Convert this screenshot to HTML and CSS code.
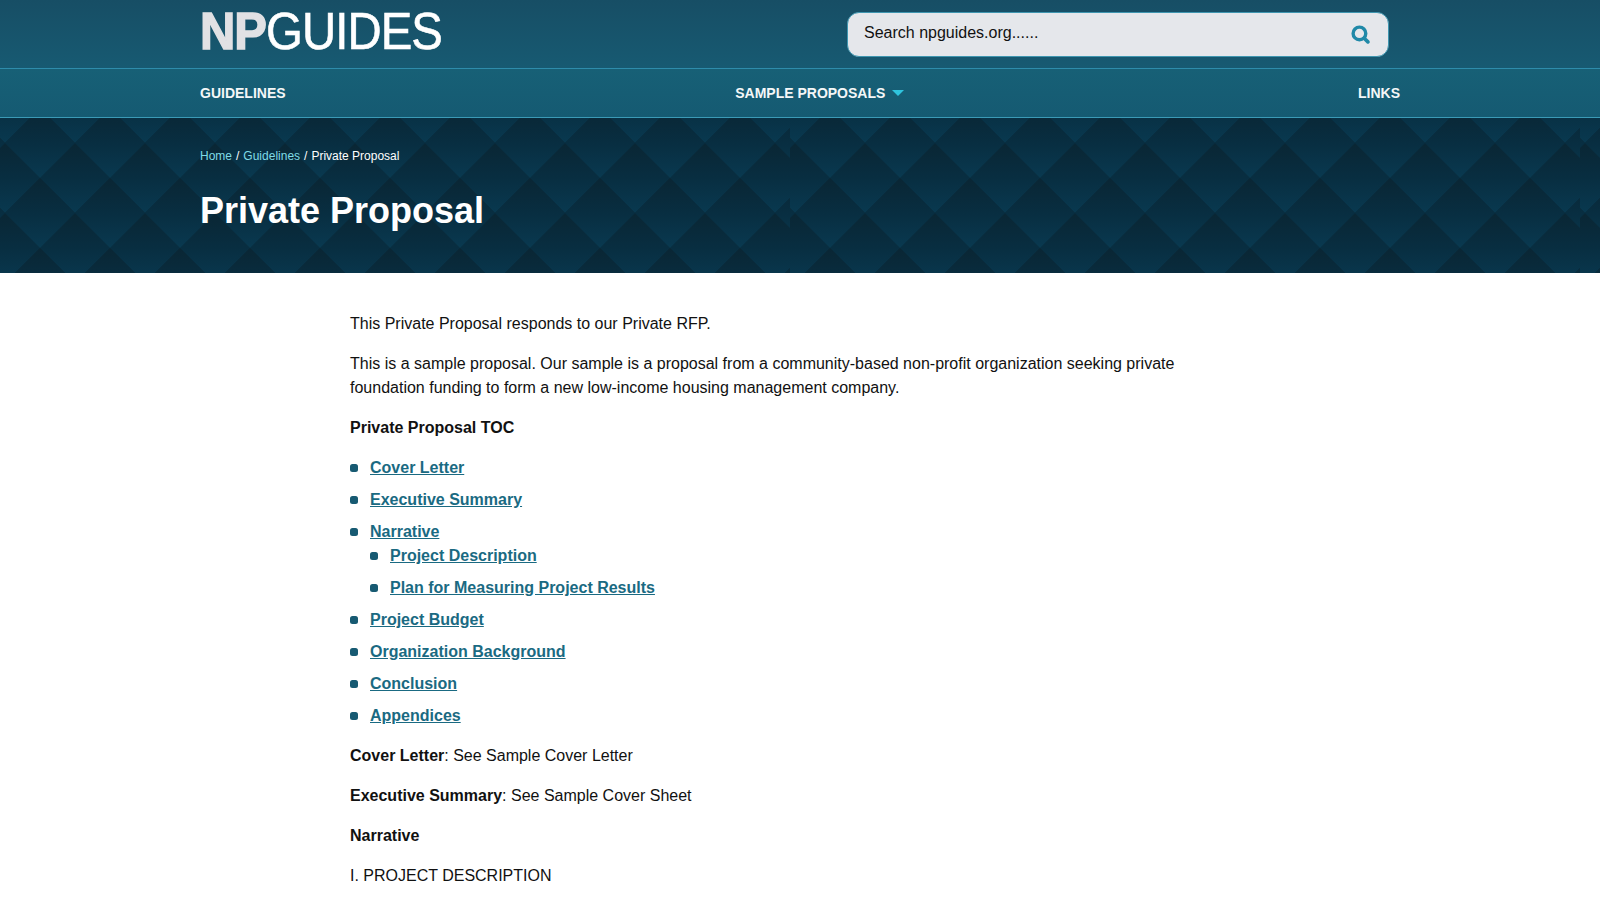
FILE: index.html
```html
<!DOCTYPE html>
<html lang="en">
<head>
    <meta charset="UTF-8">
    <meta name="viewport" content="width=device-width, initial-scale=1.0">
    <title>Private Proposal</title>
    <link rel="stylesheet" href="styles.css">
</head>
<body>
    <!-- logo and search -->
    <header class="top-bar">
        <div class="wrap top-inner">
            <a class="logo" href="#"><span class="logo-np">NP</span><span class="logo-guides">GUIDES</span></a>
            <form class="search">
                <span class="search-text">Search npguides.org......</span>
                <svg class="search-icon" viewBox="0 0 18 18" width="19" height="19">
                    <circle cx="8" cy="8" r="6" fill="none" stroke="#2089a8" stroke-width="3.2"></circle>
                    <path d="M12.5 12.5l3.5 3.5" stroke="#2089a8" stroke-width="3.4" stroke-linecap="round"></path>
                </svg>
            </form>
        </div>
    </header>

    <nav class="main-nav">
        <div class="wrap nav-inner">
            <a href="#">GUIDELINES</a>
            <a href="#">SAMPLE PROPOSALS<span class="caret"></span></a>
            <a href="#">LINKS</a>
        </div>
    </nav>

    <!-- page title -->
    <section class="hero">
        <div class="wrap">
            <div class="crumbs">
                <a href="#">Home</a><span class="sep">/</span><a href="#">Guidelines</a><span class="sep">/</span><span>Private Proposal</span>
            </div>
            <h1>Private Proposal</h1>
        </div>
    </section>

    <main class="content">
        <p>This Private Proposal responds to our Private RFP.</p>
        <p>This is a sample proposal. Our sample is a proposal from a community-based non-profit organization seeking private foundation funding to form a new low-income housing management company.</p>
        <p><strong>Private Proposal TOC</strong></p>
        <ul>
            <li><a href="#">Cover Letter</a></li>
            <li><a href="#">Executive Summary</a></li>
            <li><a href="#">Narrative</a>
                <ul>
                    <li><a href="#">Project Description</a></li>
                    <li><a href="#">Plan for Measuring Project Results</a></li>
                </ul>
            </li>
            <li><a href="#">Project Budget</a></li>
            <li><a href="#">Organization Background</a></li>
            <li><a href="#">Conclusion</a></li>
            <li><a href="#">Appendices</a></li>
        </ul>
        <p><strong>Cover Letter</strong>: See Sample Cover Letter</p>
        <p><strong>Executive Summary</strong>: See Sample Cover Sheet</p>
        <p><strong>Narrative</strong></p>
        <p>I. PROJECT DESCRIPTION</p>
    </main>
</body>
</html>
```

FILE: styles.css
```css
body {
    margin: 0;
    background: #fff;
    color: #111;
    font-family: "Liberation Sans", Arial, sans-serif;
    font-size: 16px;
    line-height: 24px;
}

.wrap {
    width: 1200px;
    margin: 0 auto;
}

/* top bar */
.top-bar {
    height: 68px;
    background: linear-gradient(#174e65, #175a72);
}

.top-inner {
    display: flex;
    justify-content: space-between;
    align-items: flex-start;
    box-sizing: border-box;
    padding: 12px 11px 0 0;
}

.logo {
    display: flex;
    height: 44px;
    margin-top: -1px;
    font-size: 52px;
    line-height: 40px;
    text-decoration: none;
}

.logo-np {
    width: 66px;
    color: #e1e1e4;
    font-weight: bold;
    letter-spacing: -1px;
    -webkit-text-stroke: 1.5px #e1e1e4;
    transform: scaleX(.94);
    transform-origin: left;
}

.logo-guides {
    width: 175px;
    color: #fff;
    letter-spacing: -1px;
    -webkit-text-stroke: .6px #fff;
    transform: scaleX(.91);
    transform-origin: left;
}

.search {
    display: flex;
    justify-content: space-between;
    align-items: center;
    box-sizing: border-box;
    width: 542px;
    height: 45px;
    padding: 0 18px 0 16px;
    background: #e5e7eb;
    border: 1px solid #3f96b0;
    border-radius: 12px;
}

.search-text {
    margin-top: -4px;
}

/* nav */
.main-nav {
    height: 48px;
    background: linear-gradient(#176076, #155a72);
    border-top: 1px solid #2e8cab;
    border-bottom: 1px solid #3b9ab6;
}

.nav-inner {
    display: flex;
    justify-content: space-between;
    align-items: center;
    height: 48px;
}

.nav-inner a {
    color: #f4f7f8;
    font-size: 14px;
    font-weight: bold;
    text-decoration: none;
}

.nav-inner a:nth-child(2) {
    margin-left: -4px;
}

.caret {
    display: inline-block;
    margin-left: 7px;
    vertical-align: 2px;
    border-top: 6px solid #2fc4de;
    border-left: 6px solid transparent;
    border-right: 6px solid transparent;
}

/* hero with the diamond tile */
.hero {
    box-sizing: border-box;
    height: 155px;
    padding-top: 26px;
    background-color: #07293a;
    background-image: url("data:image/svg+xml,%3Csvg xmlns='http://www.w3.org/2000/svg' width='790' height='155'%3E%3Cdefs%3E%3ClinearGradient id='g' x1='0' y1='0' x2='0' y2='1'%3E%3Cstop offset='0' stop-color='%230a2634'/%3E%3Cstop offset='.5' stop-color='%23082e41'/%3E%3Cstop offset='1' stop-color='%23093950'/%3E%3C/linearGradient%3E%3Cpath id='d' d='M35 0L70 35L35 70L0 35Z' fill='url(%23g)'/%3E%3Cpattern id='p' width='70' height='70' patternUnits='userSpaceOnUse' x='-30' y='25'%3E%3Cuse href='%23d'/%3E%3Cuse href='%23d' x='-35' y='-35'/%3E%3Cuse href='%23d' x='35' y='-35'/%3E%3Cuse href='%23d' x='-35' y='35'/%3E%3Cuse href='%23d' x='35' y='35'/%3E%3C/pattern%3E%3C/defs%3E%3Crect width='790' height='155' fill='url(%23p)'/%3E%3C/svg%3E");
    background-size: 790px 155px;
    color: #fff;
}

.crumbs {
    font-size: 12px;
    line-height: 24px;
}

.crumbs a {
    color: #7fdbe6;
    text-decoration: none;
}

.sep {
    margin: 0 4px;
}

h1 {
    margin: 19px 0 0;
    font-size: 36px;
    line-height: 48px;
    font-weight: bold;
}

/* main text */
.content {
    width: 900px;
    margin: 0 auto;
    padding-top: 39px;
}

.content p {
    margin: 0 0 16px;
}

.content ul {
    margin: 0 0 16px;
    padding: 0 0 0 20px;
    list-style: none;
}

.content li {
    position: relative;
    margin-bottom: 8px;
}

.content li ul {
    margin: 0;
}

.content li::before {
    content: "";
    position: absolute;
    left: -20px;
    top: 8px;
    width: 8px;
    height: 8px;
    background: #175a72;
    border-radius: 2.5px;
}

.content a {
    color: #1a6a82;
    font-weight: bold;
}
```
